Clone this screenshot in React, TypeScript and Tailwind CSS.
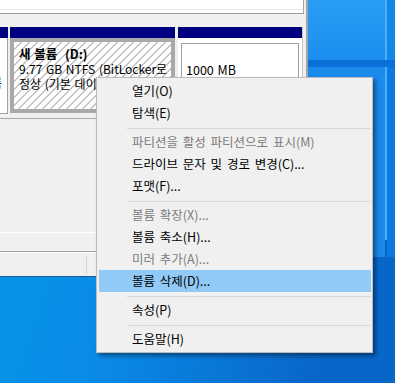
import React from "react";

function Wallpaper() {
  return (
    <svg className="absolute inset-0" width="395" height="383" viewBox="0 0 395 383">
      <defs>
        <linearGradient id="base" x1="0" y1="0" x2="1" y2="0.3">
          <stop offset="0" stopColor="#029ae9" />
          <stop offset="0.5" stopColor="#0a8ae6" />
          <stop offset="1" stopColor="#0866c9" />
        </linearGradient>
        <linearGradient id="pane" x1="0" y1="0" x2="0" y2="1">
          <stop offset="0" stopColor="#2a9ef4" />
          <stop offset="1" stopColor="#1b8fef" />
        </linearGradient>
      </defs>
      <rect x="0" y="0" width="395" height="383" fill="url(#base)" />
      <rect x="308" y="0" width="77" height="60" fill="url(#pane)" />
      <rect x="387" y="0" width="8" height="60" fill="#1386ea" />
      <rect x="385" y="0" width="2" height="240" fill="#45b2fb" />
      <rect x="308" y="60" width="87" height="7" fill="#0a6fd8" />
      <rect x="308" y="67" width="77" height="190" fill="#1a8aeb" />
      <rect x="387" y="67" width="8" height="190" fill="#0d78e0" />
    </svg>
  );
}

function Window() {
  return (
    <div className="relative w-[308px] h-[276px] bg-[#f0f0f0] border-r-2 border-[#a3a3a3] flex flex-col shadow-[0_1px_0_#1a5c98] text-black">
      {/* top list pane */}
      <div className="h-[14px] w-[304px] bg-white border-b border-r border-[#a0a0a0]">
        <div className="mt-[9px] h-px bg-[#e6e6e6]" />
      </div>
      <div className="h-[13px]" />
      {/* partitions row */}
      <div className="h-[87px] flex items-start">
        <div className="w-[8px] flex flex-col">
          <div className="h-[11px] bg-[#000080]" />
          <div className="h-[76px] bg-white border-r border-b border-[#a0a0a0] overflow-hidden pt-[37px] leading-[15px] whitespace-nowrap">
            <span className="inline-block ml-[-9px]">름</span>
          </div>
        </div>
        <div className="w-[2px]" />
        <div className="w-[165px] flex flex-col">
          <div className="h-[11px] bg-[#000080]" />
          <div className="h-[75px] border-4 border-[#a9a9a9] bg-[repeating-linear-gradient(135deg,#ffffff_0px,#ffffff_4.66px,#c2c2c2_4.66px,#c2c2c2_5.66px)] overflow-hidden pl-[5px] pt-[4px] leading-[15px] whitespace-nowrap text-[12px] [word-spacing:1px]">
            <div className="font-bold text-[12.5px]">새 볼륨&nbsp;&nbsp;(D:)</div>
            <div>9.77 GB NTFS (BitLocker로 암호화됨)</div>
            <div>정상 (기본 데이터 파티션)</div>
          </div>
        </div>
        <div className="w-[3px]" />
        <div className="w-[124px] flex flex-col">
          <div className="h-[11px] bg-[#000080]" />
          <div className="h-[76px] bg-white px-[3px] pt-[5px] pb-[3px]">
            <div className="h-full border border-[#a0a0a0] pl-[4px] pt-[3px] leading-[15px] whitespace-nowrap text-[12.5px] [word-spacing:1px]">
              <div>&nbsp;</div>
              <div>1000 MB</div>
            </div>
          </div>
        </div>
        <div className="w-px h-full bg-[#c4c4c4]" />
        <div className="flex-1" />
      </div>
      <div className="h-[4px]" />
      <div className="h-px bg-[#a8a8a8]" />
      <div className="h-[113px]" />
      <div className="h-px bg-white" />
      <div className="h-[18px]" />
      <div className="h-px bg-[#a0a0a0]" />
      <div className="h-px bg-white" />
      <div className="h-[23px] flex items-center">
        <div className="w-[86px]" />
        <div className="w-px h-[18px] bg-[#d5d5d5]" />
      </div>
    </div>
  );
}

type Item = { label: string; disabled?: boolean; active?: boolean } | "sep";

const items: Item[] = [
  { label: "열기(O)" },
  { label: "탐색(E)" },
  "sep",
  { label: "파티션을 활성 파티션으로 표시(M)", disabled: true },
  { label: "드라이브 문자 및 경로 변경(C)..." },
  { label: "포맷(F)..." },
  "sep",
  { label: "볼륨 확장(X)...", disabled: true },
  { label: "볼륨 축소(H)..." },
  { label: "미러 추가(A)...", disabled: true },
  { label: "볼륨 삭제(D)...", active: true },
  "sep",
  { label: "속성(P)" },
  "sep",
  { label: "도움말(H)" },
];

function ContextMenu() {
  return (
    <div className="absolute left-[96px] top-[77px] w-[277px] bg-[#f0f0f0] border border-[#bcbcbc] pl-[2px] pr-[1px] py-[2px] shadow-[3px_3px_4px_rgba(0,0,0,0.4)] text-[12.5px] [word-spacing:2px]">
      {items.map((it, i) =>
        it === "sep" ? (
          <div key={i} className="h-[7px] pt-[4px] pl-[28px] pr-[1px]">
            <div className="h-px bg-[#d7d7d7]" />
          </div>
        ) : (
          <div
            key={i}
            className={
              "h-[22px] pl-[33px] flex items-center whitespace-nowrap leading-[22px] " +
              (it.active ? "bg-[#91c9f7] " : "") +
              (it.disabled ? "text-[#7c7c7c]" : "text-black")
            }
          >
            {it.label}
          </div>
        )
      )}
    </div>
  );
}

export default function App() {
  return (
    <div className="relative w-[395px] h-[383px] overflow-hidden font-['Noto_Sans_CJK_KR',sans-serif] text-[12px]">
      <Wallpaper />
      <Window />
      <ContextMenu />
    </div>
  );
}
